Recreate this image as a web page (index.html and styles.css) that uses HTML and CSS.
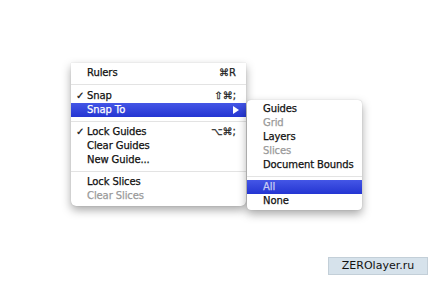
FILE: index.html
```html
<!DOCTYPE html>
<html lang="en">
<head>
    <meta charset="UTF-8">
    <title>Snap To menu</title>
    <link rel="stylesheet" href="styles.css">
</head>
<body>
    <div class="stage">
        <div class="menu main_menu">
            <div class="item"><span class="label">Rulers</span><span class="key">⌘R</span></div>
            <div class="sep"></div>
            <div class="item"><span class="check">✓</span><span class="label">Snap</span><span class="key">⇧⌘;</span></div>
            <div class="item selected"><span class="label">Snap To</span><span class="arrow"></span></div>
            <div class="sep"></div>
            <div class="item"><span class="check">✓</span><span class="label">Lock Guides</span><span class="key">⌥⌘;</span></div>
            <div class="item"><span class="label">Clear Guides</span></div>
            <div class="item"><span class="label">New Guide...</span></div>
            <div class="sep"></div>
            <div class="item"><span class="label">Lock Slices</span></div>
            <div class="item disabled"><span class="label">Clear Slices</span></div>

            <div class="menu sub_menu">
                <div class="item"><span class="label">Guides</span></div>
                <div class="item disabled"><span class="label">Grid</span></div>
                <div class="item"><span class="label">Layers</span></div>
                <div class="item disabled"><span class="label">Slices</span></div>
                <div class="item"><span class="label">Document Bounds</span></div>
                <div class="sep"></div>
                <div class="item selected"><span class="label">All</span></div>
                <div class="item"><span class="label">None</span></div>
            </div>
        </div>
    </div>

    <div class="watermark">ZEROlayer.ru</div>
</body>
</html>
```

FILE: styles.css
```css
body{
    margin:0;
    width:434px;
    height:282px;
    background:#fff;
    position:relative;
    overflow:hidden;
    font-family:"DejaVu Sans", "Liberation Sans", sans-serif;
}

.stage{
    padding:63px 0 0 71px;
}

.menu{
    background:#fff;
    border-radius:0 0 5px 5px;
    box-shadow:0 4px 10px rgba(0,0,0,0.35), 0 0 1px rgba(0,0,0,0.25);
    color:#111;
    font-size:10px;
}

.main_menu{
    position:relative;
    width:175px;
    padding:3px 0 3px;
}

.sub_menu{
    position:absolute;
    top:37px;
    left:176px;
    width:115px;
    padding:2px 0 2px;
    border-radius:4px;
}

.item{
    height:14px;
    line-height:14px;
    display:flex;
    align-items:center;
    padding:0 10px 0 16px;
    position:relative;
    white-space:nowrap;
    -webkit-text-stroke:0.25px currentColor;
}

.check{
    position:absolute;
    left:5px;
    font-size:10px;
}

.label{
    flex:1;
    letter-spacing:-0.1px;
}

.key{
    color:#222;
    font-size:10px;
}

.arrow{
    width:0;
    height:0;
    border-top:4px solid transparent;
    border-bottom:4px solid transparent;
    border-left:6px solid #fff;
    margin-right:-3px;
}

.selected{
    background:linear-gradient(#4456e6,#2435d2);
    color:#fff;
}

.sub_menu .selected{
    color:#c8ccf4;
}

.disabled{
    color:#9a9a9a;
}

.sep{
    height:1px;
    background:#e3e3e3;
    margin:4px 0 3px;
}

.main_menu > .sep:nth-of-type(2){
    margin:4px 0 4px;
}

.watermark{
    position:absolute;
    right:6px;
    bottom:7px;
    width:98px;
    height:16px;
    line-height:16px;
    text-align:center;
    background:#d6e2eb;
    border:1px solid #c3cfd8;
    color:#111;
    font-size:11px;
    font-family:"DejaVu Sans", sans-serif;
}
```
